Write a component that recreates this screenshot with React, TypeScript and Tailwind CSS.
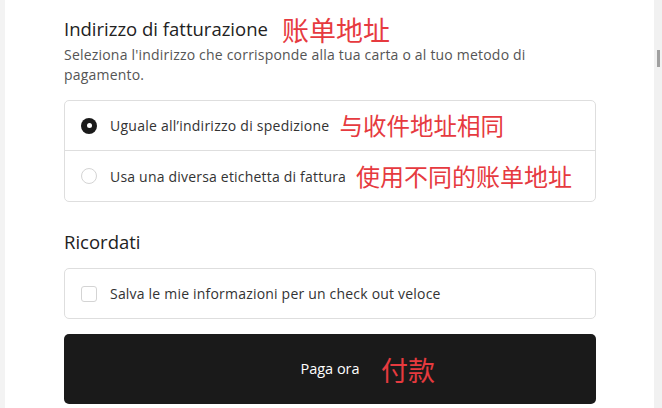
import React from 'react';

const font = { fontFamily: '"Open Sans", "Noto Sans CJK SC", sans-serif' };

const Note = ({ children, className = '' }: { children: React.ReactNode; className?: string }) => (
  <span
    className={`text-[#e63a3f] leading-none whitespace-nowrap ${className}`}
    style={{ fontFamily: '"Noto Sans CJK SC", sans-serif' }}
  >
    {children}
  </span>
);

const Radio = ({ checked }: { checked?: boolean }) =>
  checked ? (
    <span className="flex h-[16px] w-[16px] shrink-0 items-center justify-center rounded-full bg-[#1a1a1a]">
      <span className="h-[5px] w-[5px] rounded-full bg-white" />
    </span>
  ) : (
    <span className="h-[16px] w-[16px] shrink-0 rounded-full border border-[#d4d4d4] bg-white" />
  );

export default function App() {
  return (
    <div className="flex h-[408px] w-[662px] overflow-hidden bg-white" style={font}>
      <div className="w-[5px] shrink-0 bg-[#f3f3f3]" />
      <main className="flex-1 pl-[59px] pr-[58px]">
        <div className="mt-[15px] flex h-[28px] items-center gap-[14px]">
          <h2 className="text-[18.5px] leading-[24px] text-[#222]">Indirizzo di fatturazione</h2>
          <Note className="text-[27px]">账单地址</Note>
        </div>
        <p className="mt-[2px] text-[14px] leading-[20px] tracking-[0.2px] text-[#555]">
          Seleziona l'indirizzo che corrisponde alla tua carta o al tuo metodo di
          <br />
          pagamento.
        </p>

        <div className="mt-[15px] rounded-[5px] border border-[#dedede]">
          <label className="flex h-[50px] items-center gap-[13px] border-b border-[#dedede] pl-[16px]">
            <Radio checked />
            <span className="text-[14px] tracking-[0.25px] text-[#333]">Uguale all’indirizzo di spedizione</span>
            <Note className="-ml-[3px] text-[23.5px]">与收件地址相同</Note>
          </label>
          <label className="flex h-[50px] items-center gap-[13px] pl-[16px]">
            <Radio />
            <span className="text-[14px] tracking-[0.2px] text-[#333]">Usa una diversa etichetta di fattura</span>
            <Note className="-ml-[3px] text-[24px]">使用不同的账单地址</Note>
          </label>
        </div>

        <h3 className="mt-[28px] text-[18.5px] leading-[24px] text-[#222]">Ricordati</h3>

        <div className="mt-[14px] rounded-[5px] border border-[#dedede]">
          <label className="flex h-[49px] items-center gap-[13px] pl-[16px]">
            <span className="h-[16px] w-[16px] shrink-0 rounded-[3px] border border-[#d4d4d4] bg-white" />
            <span className="text-[14px] tracking-[0.2px] text-[#333]">Salva le mie informazioni per un check out veloce</span>
          </label>
        </div>

        <button className="relative mt-[15px] flex h-[70px] w-full items-center justify-center rounded-[5px] bg-[#1a1a1a]">
          <span className="text-[14.5px] text-white">Paga ora</span>
          <Note className="absolute left-[317px] top-[22px] text-[27px]">付款</Note>
        </button>
      </main>
      <div className="relative w-[8px] shrink-0 bg-[#f1f1f1]">
        <div className="absolute left-[3px] top-[50px] h-[17px] w-[3px] bg-[#a0a0a0]" />
      </div>
    </div>
  );
}
